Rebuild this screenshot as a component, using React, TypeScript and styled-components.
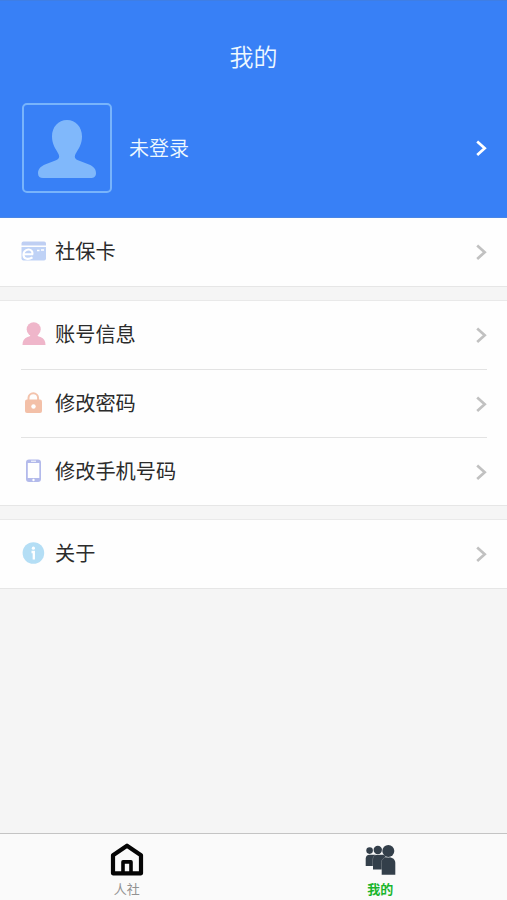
import React from "react";
import styled, { createGlobalStyle } from "styled-components";

const GlobalStyle = createGlobalStyle`
  * { box-sizing: border-box; }
  body {
    margin: 0;
    background: #f5f5f5;
    font-family: "Noto Sans CJK SC", sans-serif;
  }
`;

const Page = styled.div`
  display: flex;
  flex-direction: column;
  height: 900px;
  background: #f5f5f5;
`;

const Header = styled.header`
  display: flex;
  flex-direction: column;
  height: 218px;
  background: #3880f6;
  color: #eef9ff;
  border-top: 1px solid #3f7ee4;
  border-bottom: 1px solid #4a86e6;
`;

const Title = styled.h1`
  margin: 37px 0 0;
  height: 36px;
  line-height: 36px;
  font-size: 24px;
  font-weight: 350;
  text-align: center;
`;

const Profile = styled.div`
  display: flex;
  align-items: center;
  height: 90px;
  margin-top: 29px;
  padding: 0 20px 0 22px;
`;

const Avatar = styled.div`
  display: flex;
  width: 90px;
  height: 90px;
  border: 2px solid #78b4fb;
  border-radius: 5px;
`;

const ProfileName = styled.span`
  flex: 1;
  margin-left: 17px;
  font-size: 20px;
  line-height: 30px;
  padding-bottom: 1px;
  font-weight: 350;
`;

const Group = styled.section`
  padding: 0 20px 0 21px;
  background: #fefefe;
  border-bottom: 1px solid #e6e6e6;

  & + & {
    margin-top: 13px;
    border-top: 1px solid #e9e9e9;
  }
`;

const Row = styled.div`
  display: flex;
  align-items: center;
  height: 68px;

  & + & {
    border-top: 1px solid #e3e3e3;
  }
`;

const IconSlot = styled.span`
  display: flex;
  width: 34px;
  height: 26px;
  margin-bottom: 2px;
`;

const Label = styled.span`
  flex: 1;
  padding-bottom: 2px;
  font-size: 20.2px;
  line-height: 30px;
  color: #2b2b2b;
`;

const TabBar = styled.nav`
  display: grid;
  grid-template-columns: 1fr 1fr;
  height: 67px;
  margin-top: auto;
  background: #fafafa;
  border-top: 1px solid #c4c4c4;
`;

const Tab = styled.div<{ $active?: boolean }>`
  display: flex;
  flex-direction: column;
  align-items: center;
  padding-top: 8px;
  font-size: 13px;
  line-height: 18px;
  font-weight: ${(p) => (p.$active ? 700 : 400)};
  color: ${(p) => (p.$active ? "#19b52b" : "#929292")};

  svg {
    margin-bottom: 2px;
  }
`;

const Chevron = ({ color = "#c1c1c1" }: { color?: string }) => (
  <svg width="12" height="18" viewBox="0 0 12 18" fill="none">
    <path d="M2.200 2.500 9.700 9.200 2.200 15.900" stroke={color} strokeWidth="2.700" />
  </svg>
);

const AvatarIcon = () => (
  <svg width="86" height="86" viewBox="0 0 86 86">
    <path
      fill="#80b8fb"
      d="M43 15c8.700 0 15 7 15 16.500c0 8-3.500 12-6.500 17.500-1.500 3.200-.5 5 2.500 6.200l11 4.300c5 2 7 5 7 8.700c0 3.300-2.500 4.800-5 4.800H19c-3 0-5-1.500-5-4.800c0-4 2.500-6.700 7-8.700l11-4.300c3-1.200 4-3 2.500-6.200C31.500 43.500 28 39.500 28 31.500C28 22 34.300 15 43 15Z"
    />
  </svg>
);

const CardIcon = () => (
  <svg width="26" height="26" viewBox="0 0 26 26">
    <path fill="#bfcff3" d="M2.500 3.500h20.500a2 2 0 0 1 2 2v2H.5V5.500a2 2 0 0 1 2-2Z" />
    <path fill="#bfd2f6" d="M.5 9H25v11.500a2 2 0 0 1-2 2H2.500a2 2 0 0 1-2-2Z" />
    <path
      d="M3 16.300H11.300C12 13.200 9.800 11.300 7.300 11.500C4 11.700 2.200 14.500 2.500 17.300C3 21.300 7.500 21.800 11.500 19.300"
      fill="none"
      stroke="#fff"
      strokeWidth="2.100"
    />
    <path d="M16 12.500h2.500M20 12h3" stroke="#fff" strokeWidth="1.300" />
  </svg>
);

const PersonIcon = () => (
  <svg width="26" height="26" viewBox="0 0 26 26" fill="#efb6ca">
    <ellipse cx="12.700" cy="8.300" rx="7" ry="7" />
    <path d="M9 12h7.500c-.5 3 .5 3.200 3 4c3.500 1.200 5 4 5 8H1.500c0-4 1.500-6.800 5-8c2.500-.8 3.500-1 2.500-4Z" />
  </svg>
);

const LockIcon = () => (
  <svg width="26" height="26" viewBox="0 0 26 26">
    <path d="M7.500 11V8a4.800 4.800 0 0 1 9.600 0v3" fill="none" stroke="#f3c3ac" strokeWidth="2" />
    <rect x="4" y="9.500" width="17" height="13.500" rx="2" fill="#f3c0a8" />
    <circle cx="12.500" cy="16.500" r="2.200" fill="#fff" />
  </svg>
);

const PhoneIcon = () => (
  <svg width="26" height="26" viewBox="0 0 26 26">
    <rect x="5" y="1.500" width="15" height="22.500" rx="3" fill="#b3baeb" />
    <rect x="6.800" y="5" width="11.500" height="15" fill="#fff" />
    <path d="M10 3.200h5" stroke="#fff" strokeWidth="1" />
    <circle cx="12.500" cy="22" r="1.200" fill="#fff" />
  </svg>
);

const InfoIcon = () => (
  <svg width="26" height="26" viewBox="0 0 26 26">
    <circle cx="12.400" cy="13" r="10.800" fill="#b4def5" />
    <circle cx="12.400" cy="8.200" r="1.600" fill="#fff" />
    <path d="M10.500 12h2.300v7.500" fill="none" stroke="#fff" strokeWidth="2.300" />
  </svg>
);

const HomeIcon = () => (
  <svg width="36" height="36" viewBox="0 0 36 36" fill="none" stroke="#050505">
    <path d="M4 13.200 18 3.700l14 9.500v18.100h-28Z" strokeWidth="4.200" strokeLinejoin="round" />
    <path d="M14 31V19.900h8V31" strokeWidth="3.600" strokeLinejoin="round" />
  </svg>
);

const PeopleIcon = () => (
  <svg width="36" height="36" viewBox="0 0 36 36" fill="#333f4a">
    <circle cx="7.600" cy="8.600" r="3.300" />
    <path d="M3.700 24v-7.300c0-2.700 1.500-4 4-4h6v11.300Z" />
    <path
      d="M11 27.500v-9.500c0-3.500 1.800-5.300 4.800-5.300h8v14.800Z"
      stroke="#fafafa"
      strokeWidth="0.400"
      paintOrder="stroke"
    />
    <circle cx="15.800" cy="8" r="4.200" stroke="#fafafa" strokeWidth="0.800" paintOrder="stroke" />
    <path
      d="M19.700 32.800V20.500c0-3.500 2.500-5.300 6.800-5.300s6.800 2.300 6.800 5.800v11.800Z"
      stroke="#fafafa"
      strokeWidth="0.400"
      paintOrder="stroke"
    />
    <circle cx="26.300" cy="8.900" r="6" stroke="#fafafa" strokeWidth="0.900" paintOrder="stroke" />
  </svg>
);

const groups = [
  [{ label: "社保卡", Icon: CardIcon }],
  [
    { label: "账号信息", Icon: PersonIcon },
    { label: "修改密码", Icon: LockIcon },
    { label: "修改手机号码", Icon: PhoneIcon },
  ],
  [{ label: "关于", Icon: InfoIcon }],
];

export default function App() {
  return (
    <Page>
      <GlobalStyle />
      <Header>
        <Title>我的</Title>
        <Profile>
          <Avatar>
            <AvatarIcon />
          </Avatar>
          <ProfileName>未登录</ProfileName>
          <Chevron color="#ffffff" />
        </Profile>
      </Header>
      <main>
        {groups.map((rows) => (
          <Group key={rows[0].label}>
            {rows.map(({ label, Icon }) => (
              <Row key={label}>
                <IconSlot>
                  <Icon />
                </IconSlot>
                <Label>{label}</Label>
                <Chevron />
              </Row>
            ))}
          </Group>
        ))}
      </main>
      <TabBar>
        <Tab>
          <HomeIcon />
          人社
        </Tab>
        <Tab $active>
          <PeopleIcon />
          我的
        </Tab>
      </TabBar>
    </Page>
  );
}
